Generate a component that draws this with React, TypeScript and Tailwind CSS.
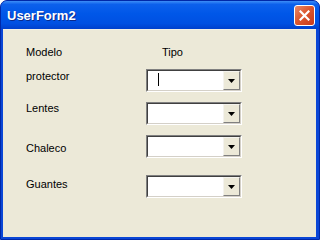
import React from "react"

function Combo({ caret = false }: { caret?: boolean }) {
  return (
    <div className="w-[96px] h-[23px] border border-t-[#808080] border-l-[#808080] border-b-white border-r-white">
      <div className="w-full h-full flex border border-t-[#404040] border-l-[#404040] border-b-[#d4d0c8] border-r-[#d4d0c8] bg-white">
        <div className="flex-1 relative">
          {caret && <div className="absolute left-[10px] top-[2px] w-px h-[13px] bg-black" />}
        </div>
        <div className="w-[17px] h-full flex items-center justify-center bg-[#ece9d8] border border-t-[#f4f3ee] border-l-[#f4f3ee] border-b-[#808080] border-r-[#808080]">
          <svg width="7" height="4" viewBox="0 0 7 4">
            <path d="M0 0H7L3.5 4Z" fill="#000" />
          </svg>
        </div>
      </div>
    </div>
  )
}

const rows = [
  { label: "protector", offset: "mt-[1px]", gap: "mt-[10px]", caret: true },
  { label: "Lentes", offset: "mt-[0px]", gap: "mt-[10px]", caret: false },
  { label: "Chaleco", offset: "mt-[7px]", gap: "mt-[10px]", caret: false },
  { label: "Guantes", offset: "mt-[3px]", gap: "mt-[17px]", caret: false },
]

export default function App() {
  return (
    <div className="w-[320px] h-[240px] bg-white" style={{ fontFamily: '"Liberation Sans", Arial, sans-serif' }}>
      <div className="w-[320px] h-[240px] rounded-t-[7px] flex flex-col bg-[#0a46d6] border border-[#0028a8]">
        {/* title bar */}
        <div className="h-[28px] shrink-0 rounded-t-[6px] flex items-center justify-between pl-[6px] pr-[4px] bg-[linear-gradient(#3d8ef7_0%,#0c60ec_12%,#0057e8_45%,#0050e2_80%,#0040cc_100%)]">
          <span className="text-white text-[13px] font-bold leading-none mt-[1px] [text-shadow:1px_1px_0_#0a2a8c]">UserForm2</span>
          <div className="w-[21px] h-[21px] rounded-[3px] border border-white flex items-center justify-center bg-[linear-gradient(135deg,#e98a6a_0%,#dd5830_45%,#c8391a_100%)] mt-[1px]">
            <svg width="11" height="11" viewBox="0 0 11 11">
              <path d="M1.5 1.5L9.5 9.5M9.5 1.5L1.5 9.5" stroke="#fff" strokeWidth="2.2" strokeLinecap="square" />
            </svg>
          </div>
        </div>
        {/* client */}
        <div className="flex-1 ml-[2px] mr-[3px] mb-[2px] bg-[#ece9d8] border-t border-[#f2f0e6] text-[11px] leading-[13px] text-black pl-[23px]">
          <div className="flex mt-[16px]">
            <span className="w-[136px]">Modelo</span>
            <span>Tipo</span>
          </div>
          {rows.map((r) => (
            <div key={r.label} className={`flex items-start ${r.gap}`}>
              <span className={`w-[120px] ${r.offset}`}>{r.label}</span>
              <Combo caret={r.caret} />
            </div>
          ))}
        </div>
      </div>
    </div>
  )
}
